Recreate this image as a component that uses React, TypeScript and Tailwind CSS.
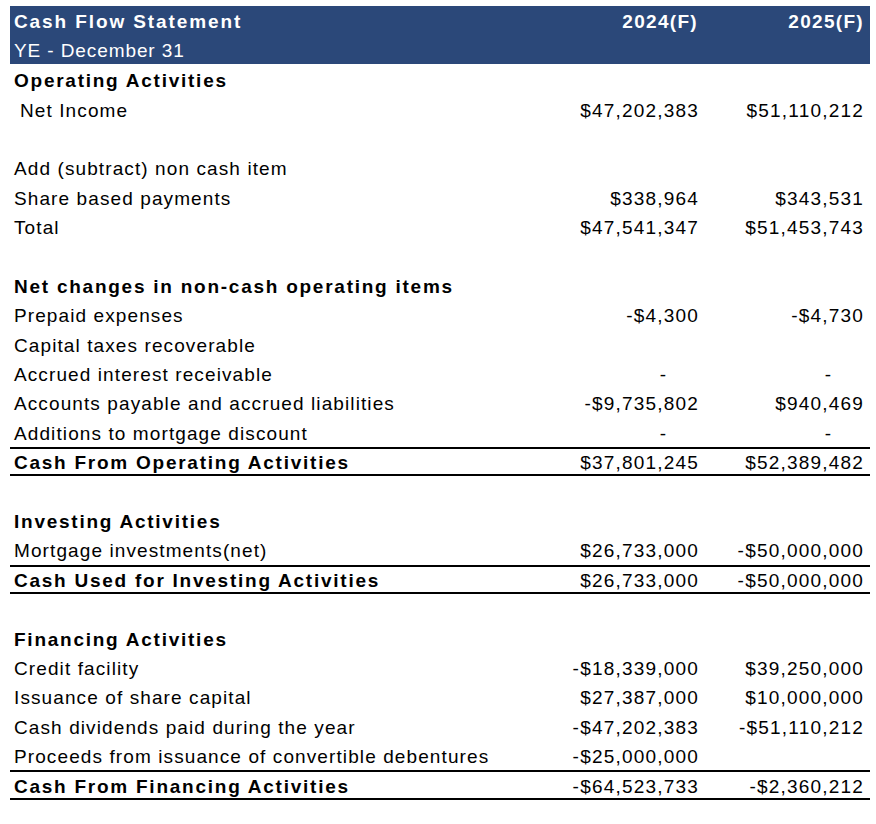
import React from "react";

type Row = {
  label?: string;
  a?: string;
  b?: string;
  bold?: boolean;
  total?: boolean;
  indent?: boolean;
};

const rows: Row[] = [
  { label: "Operating Activities", bold: true },
  { label: "Net Income", a: "$47,202,383", b: "$51,110,212", indent: true },
  {},
  { label: "Add (subtract) non cash item" },
  { label: "Share based payments", a: "$338,964", b: "$343,531" },
  { label: "Total", a: "$47,541,347", b: "$51,453,743" },
  {},
  { label: "Net changes in non-cash operating items", bold: true },
  { label: "Prepaid expenses", a: "-$4,300", b: "-$4,730" },
  { label: "Capital taxes recoverable" },
  { label: "Accrued interest receivable", a: "-", b: "-" },
  { label: "Accounts payable and accrued liabilities", a: "-$9,735,802", b: "$940,469" },
  { label: "Additions to mortgage discount", a: "-", b: "-" },
  { label: "Cash From Operating Activities", a: "$37,801,245", b: "$52,389,482", bold: true, total: true },
  {},
  { label: "Investing Activities", bold: true },
  { label: "Mortgage investments(net)", a: "$26,733,000", b: "-$50,000,000" },
  { label: "Cash Used for Investing Activities", a: "$26,733,000", b: "-$50,000,000", bold: true, total: true },
  {},
  { label: "Financing Activities", bold: true },
  { label: "Credit facility", a: "-$18,339,000", b: "$39,250,000" },
  { label: "Issuance of share capital", a: "$27,387,000", b: "$10,000,000" },
  { label: "Cash dividends paid during the year", a: "-$47,202,383", b: "-$51,110,212" },
  { label: "Proceeds from issuance of convertible debentures", a: "-$25,000,000" },
  { label: "Cash From Financing Activities", a: "-$64,523,733", b: "-$2,360,212", bold: true, total: true },
];

// numbers carry trailing letter-spacing, so right padding is 1px short
const ValueA = ({ v }: { v?: string }) =>
  v === "-" ? (
    <div className="w-[150px] text-right pr-[32px]">-</div>
  ) : (
    <div className="w-[150px] text-right -mr-[1px] tracking-[1.2px]">{v}</div>
  );

const ValueB = ({ v }: { v?: string }) =>
  v === "-" ? (
    <div className="w-[172px] text-right pr-[39px]">-</div>
  ) : (
    <div className="w-[172px] text-right pr-[6px] tracking-[1.2px]">{v}</div>
  );

const CashFlow = () => {
  return (
    <div className="min-h-screen w-full bg-white pt-[6px] pl-[10px] text-black text-[19px] leading-none font-['Liberation_Sans',Arial,sans-serif]">
      <div className="w-[860px]">
        {/* header */}
        <div className="bg-[#2b4879] text-white">
          <div className="flex items-center h-[29px] pt-[1px]">
            <div className="flex-1 pl-[4px] font-bold tracking-[1.9px]">Cash Flow Statement</div>
            <div className="w-[150px] text-right font-bold tracking-[1.3px]">2024(F)</div>
            <div className="w-[172px] pr-[6px] text-right font-bold tracking-[1.3px]">2025(F)</div>
          </div>
          <div className="flex items-center h-[29px] pt-[1px] pl-[4px] tracking-[0.9px]">YE - December 31</div>
        </div>

        <div className="pt-[1px]">
          {rows.map((r, i) => (
            <div
              key={i}
              className={`flex items-center h-[29.4px] pt-[2px] ${r.total ? "border-y-2 border-black" : ""}`}
            >
              <div
                className={`flex-1 ${r.indent ? "pl-[10px]" : "pl-[4px]"} ${
                  r.bold ? "font-bold tracking-[1.75px]" : "tracking-[1.1px]"
                }`}
              >
                {r.label}
              </div>
              <ValueA v={r.a} />
              <ValueB v={r.b} />
            </div>
          ))}
        </div>
      </div>
    </div>
  );
};

export default function App() {
  return <CashFlow />;
}
